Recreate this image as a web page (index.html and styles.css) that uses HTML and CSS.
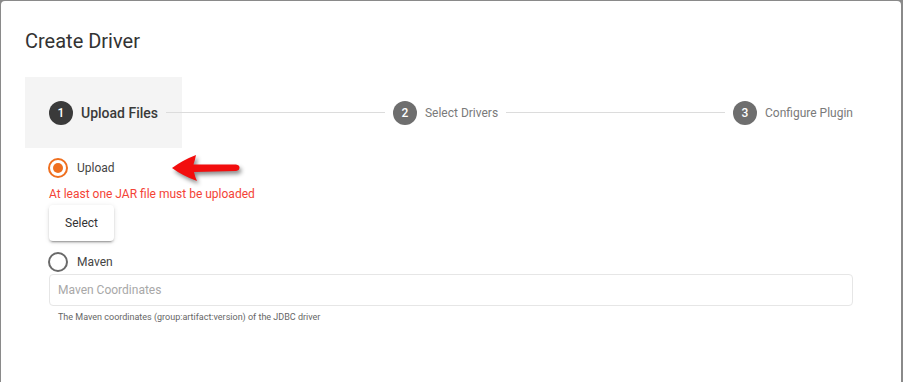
FILE: index.html
```html
<!DOCTYPE html>
<html>
<head>
<meta charset="utf-8">
<link rel="stylesheet" href="styles.css">
</head>
<body>
<div class="dialog">
  <h1 class="title">Create Driver</h1>
  <div class="stepper">
    <div class="step active"><span class="num">1</span><span class="label">Upload Files</span></div>
    <div class="line"></div>
    <div class="step"><span class="num">2</span><span class="label">Select Drivers</span></div>
    <div class="line"></div>
    <div class="step"><span class="num">3</span><span class="label">Configure Plugin</span></div>
  </div>
  <div class="content">
    <div class="radio-row first">
      <span class="radio checked"><span class="dot"></span></span>
      <span class="radio-label">Upload</span>
    </div>
    <div class="error">At least one JAR file must be uploaded</div>
    <div class="btn-row"><button class="btn">Select</button></div>
    <div class="radio-row maven">
      <span class="radio"></span>
      <span class="radio-label">Maven</span>
    </div>
    <div class="input">Maven Coordinates</div>
    <div class="hint">The Maven coordinates (group:artifact:version) of the JDBC driver</div>
  </div>
  <svg class="arrow" width="85" height="40" viewBox="0 0 85 40">
    <path d="M7 18 Q18 10 31 5 Q30 10 28.5 14.5 L71 14.5 Q74.5 15 74.5 17.5 Q74.5 20.5 71 21 L29 22 Q30 27 32 31 Q18 26 7 18 Z" fill="#f20d0d"/>
  </svg>
</div>
</body>
</html>
```

FILE: styles.css
```css
html, body {
  margin: 0;
  padding: 0;
}
body {
  background: #8a8a8a;
  padding: 1px 2px 0 1px;
  font-family: Roboto, "Liberation Sans", sans-serif;
}
.dialog {
  position: relative;
  background: #fff;
  width: 900px;
  height: 381px;
  box-sizing: border-box;
  border-radius: 4px 4px 0 0;
  padding: 28px 24px 0 24px;
}
.title {
  margin: 0 0 24px 0;
  font-size: 20px;
  line-height: 24px;
  font-weight: 400;
  color: #333;
}
.stepper {
  display: flex;
  align-items: center;
  height: 71px;
}
.step {
  display: flex;
  align-items: center;
  gap: 8px;
  height: 71px;
  padding: 0 24px;
  flex: none;
}
.step.active {
  background: #f4f4f4;
}
.num {
  width: 24px;
  height: 24px;
  border-radius: 50%;
  background: #6e6e6e;
  color: #fff;
  font-size: 12px;
  font-weight: 500;
  display: flex;
  align-items: center;
  justify-content: center;
}
.step.active .num {
  background: #3a3a3a;
}
.label {
  font-size: 12px;
  color: #7a7a7a;
}
.step.active .label {
  font-size: 14px;
  font-weight: 500;
  color: #3a3a3a;
}
.line {
  flex: auto;
  border-top: 1px solid #dcdcdc;
  margin: 0 -16px;
}
.content {
  padding: 0 24px;
}
.radio-row {
  display: flex;
  align-items: center;
  gap: 9px;
  height: 20px;
  margin-top: 10px;
}
.radio-row.maven {
  margin-top: 11px;
}
.radio {
  width: 20px;
  height: 20px;
  box-sizing: border-box;
  border: 2px solid #6a6a6a;
  border-radius: 50%;
  display: flex;
  align-items: center;
  justify-content: center;
  margin-left: -1px;
}
.radio.checked {
  border-color: #ef6f1f;
}
.dot {
  width: 10px;
  height: 10px;
  border-radius: 50%;
  background: #ef6f1f;
}
.radio-label {
  font-size: 12px;
  color: #444;
}
.error {
  margin-top: 9px;
  font-size: 12px;
  line-height: 14px;
  color: #f44336;
}
.btn-row {
  margin-top: 4px;
}
.btn {
  height: 36px;
  padding: 0 16px;
  border: none;
  border-radius: 4px;
  background: #fff;
  font-family: Roboto, "Liberation Sans", sans-serif;
  font-size: 12px;
  color: #333;
  box-shadow: 0 3px 1px -2px rgba(0,0,0,.2), 0 2px 2px 0 rgba(0,0,0,.14), 0 1px 5px 0 rgba(0,0,0,.12);
}
.input {
  margin-top: 2px;
  height: 32px;
  box-sizing: border-box;
  border: 1px solid #e6e6e6;
  border-radius: 4px;
  padding-left: 8px;
  display: flex;
  align-items: center;
  font-size: 12px;
  color: #a8a8a8;
}
.hint {
  margin-top: 5px;
  padding-left: 9px;
  font-size: 9px;
  line-height: 12px;
  color: #666;
}
.arrow {
  position: absolute;
  left: 164px;
  top: 149px;
  filter: drop-shadow(2px 3px 2px rgba(0,0,0,.45));
}
```
